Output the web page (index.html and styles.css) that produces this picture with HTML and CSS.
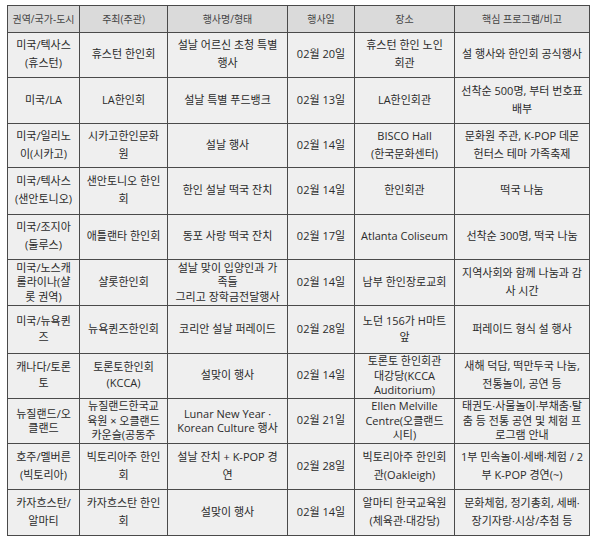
FILE: index.html
```html
<!DOCTYPE html>
<html lang="ko">
<head>
<meta charset="utf-8">
<link rel="stylesheet" href="styles.css">
</head>
<body>
<div class="table">
  <div class="c h">권역/국가-도시</div>
  <div class="c h">주최(주관)</div>
  <div class="c h">행사명/형태</div>
  <div class="c h">행사일</div>
  <div class="c h">장소</div>
  <div class="c h">핵심 프로그램/비고</div>

  <div class="c">미국/텍사스<br>(휴스턴)</div>
  <div class="c">휴스턴 한인회</div>
  <div class="c">설날 어르신 초청 특별<br>행사</div>
  <div class="c">02월 20일</div>
  <div class="c">휴스턴 한인 노인<br>회관</div>
  <div class="c">설 행사와 한인회 공식행사</div>

  <div class="c">미국/LA</div>
  <div class="c">LA한인회</div>
  <div class="c">설날 특별 푸드뱅크</div>
  <div class="c">02월 13일</div>
  <div class="c">LA한인회관</div>
  <div class="c">선착순 500명, 부터 번호표<br>배부</div>

  <div class="c">미국/일리노<br>이(시카고)</div>
  <div class="c">시카고한인문화<br>원</div>
  <div class="c">설날 행사</div>
  <div class="c">02월 14일</div>
  <div class="c">BISCO Hall<br>(한국문화센터)</div>
  <div class="c">문화원 주관, K-POP 데몬<br>헌터스 테마 가족축제</div>

  <div class="c">미국/텍사스<br>(샌안토니오)</div>
  <div class="c">샌안토니오 한인<br>회</div>
  <div class="c">한인 설날 떡국 잔치</div>
  <div class="c">02월 14일</div>
  <div class="c">한인회관</div>
  <div class="c">떡국 나눔</div>

  <div class="c">미국/조지아<br>(둘루스)</div>
  <div class="c">애틀랜타 한인회</div>
  <div class="c">동포 사랑 떡국 잔치</div>
  <div class="c">02월 17일</div>
  <div class="c">Atlanta Coliseum</div>
  <div class="c">선착순 300명, 떡국 나눔</div>

  <div class="c t3">미국/노스캐<br>롤라이나(샬<br>롯 권역)</div>
  <div class="c">샬롯한인회</div>
  <div class="c t3">설날 맞이 입양인과 가<br>족들<br>그리고 장학금전달행사</div>
  <div class="c">02월 14일</div>
  <div class="c">남부 한인장로교회</div>
  <div class="c">지역사회와 함께 나눔과 감<br>사 시간</div>

  <div class="c t2">미국/뉴욕퀸<br>즈</div>
  <div class="c">뉴욕퀸즈한인회</div>
  <div class="c">코리안 설날 퍼레이드</div>
  <div class="c">02월 28일</div>
  <div class="c t2">노던 156가 H마트<br>앞</div>
  <div class="c">퍼레이드 형식 설 행사</div>

  <div class="c t2">캐나다/토론<br>토</div>
  <div class="c t2">토론토한인회<br>(KCCA)</div>
  <div class="c">설맞이 행사</div>
  <div class="c">02월 14일</div>
  <div class="c t3">토론토 한인회관<br>대강당(KCCA<br>Auditorium)</div>
  <div class="c">새해 덕담, 떡만두국 나눔,<br>전통놀이, 공연 등</div>

  <div class="c t3">뉴질랜드/오<br>클랜드</div>
  <div class="c t3">뉴질랜드한국교<br>육원 × 오클랜드<br>카운슬(공동주</div>
  <div class="c t3">Lunar New Year ·<br>Korean Culture 행사</div>
  <div class="c">02월 21일</div>
  <div class="c t3">Ellen Melville<br>Centre(오클랜드<br>시티)</div>
  <div class="c t3">태권도·사물놀이·부채춤·탈<br>춤 등 전통 공연 및 체험 프<br>로그램 안내</div>

  <div class="c">호주/멜버른<br>(빅토리아)</div>
  <div class="c">빅토리아주 한인<br>회</div>
  <div class="c">설날 잔치 + K-POP 경<br>연</div>
  <div class="c">02월 28일</div>
  <div class="c">빅토리아주 한인회<br>관(Oakleigh)</div>
  <div class="c">1부 민속놀이·세배·체험 / 2<br>부 K-POP 경연(~)</div>

  <div class="c">카자흐스탄/<br>알마티</div>
  <div class="c">카자흐스탄 한인<br>회</div>
  <div class="c">설맞이 행사</div>
  <div class="c">02월 14일</div>
  <div class="c">알마티 한국교육원<br>(체육관·대강당)</div>
  <div class="c">문화체험, 정기총회, 세배·<br>장기자랑·시상/추첨 등</div>
</div>
</body>
</html>
```

FILE: styles.css
```css
html, body {
  margin: 0;
  padding: 0;
  background: #ffffff;
}

body {
  padding: 5px 0 0 7px;
  font-family: "Open Sans", "Noto Sans CJK KR", sans-serif;
  font-size: 11px;
  color: #2b2b2b;
}

.table {
  display: grid;
  grid-template-columns: 71px 87px 119px 66px 99px 134px;
  grid-template-rows: 26px 44px 45px 43px 46px 44px 45px 47px 44px 44px 45px 45px;
  gap: 1px;
  background: #4a4a4a;
  border: 1px solid #4a4a4a;
  width: max-content;
}

.c {
  background: #efefef;
  display: flex;
  align-items: center;
  justify-content: center;
  text-align: center;
  white-space: nowrap;
  overflow: hidden;
  line-height: 18px;
  padding-bottom: 2px;
  box-sizing: border-box;
}

.h {
  background: #dadada;
  font-size: 10px;
  color: #444444;
  padding-bottom: 0;
}

.t2 {
  line-height: 16px;
}

.t3 {
  line-height: 14.5px;
  padding-bottom: 0;
}
```
